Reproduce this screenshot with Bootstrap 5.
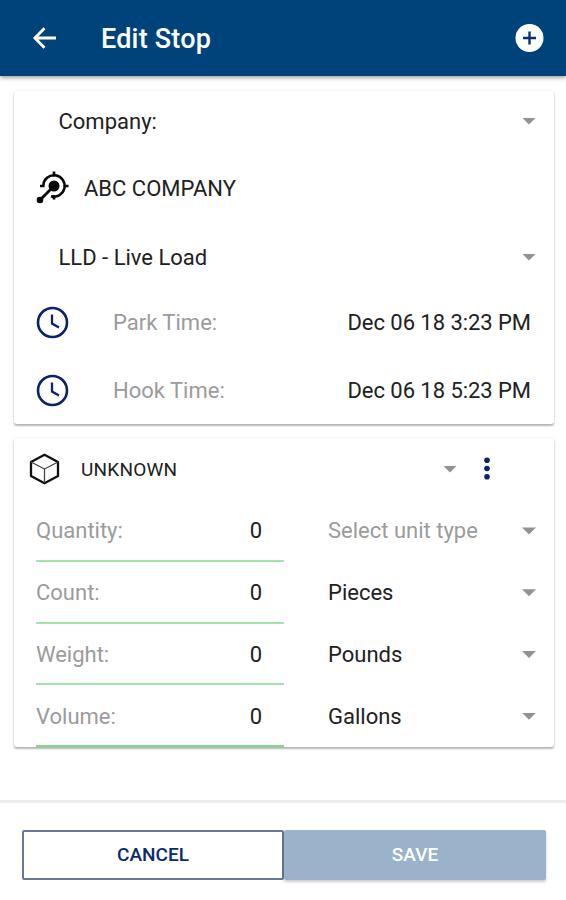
<!DOCTYPE html>
<html lang="en">
<head>
<meta charset="utf-8">
<meta name="viewport" content="width=device-width, initial-scale=1">
<title>Edit Stop</title>
<link href="https://cdn.jsdelivr.net/npm/bootstrap@5.3.0/dist/css/bootstrap.min.css" rel="stylesheet">
<style>
  body { font-family: Roboto, sans-serif; font-size: 22px; line-height: 26px; color: #212121; background: #fff; min-height: 900px; letter-spacing: 0; }
  svg { display: block; flex: none; }
  .topbar { height: 76px; background: #00427a; box-shadow: 0 1px 5px rgba(0,0,0,.5); padding: 0 22px 0 32px; }
  .topbar h1 { font-size: 27px; font-weight: 500; line-height: 32px; margin: 2px 0 0 44px; letter-spacing: .2px; }
  .panel { margin: 0 12px 0 14px; border-radius: 3px; border: 0; box-shadow: 0 2px 2px rgba(0,0,0,.27), 0 0 3px rgba(0,0,0,.1); color: inherit; }
  .stop-panel { margin-top: 15px; height: 333px; padding: 0 23px 0 22px; }
  .cargo-panel { margin-top: 14px; height: 309px; }
  .panel span { padding-top: 2px; }
  .pick { padding-left: 22.5px; margin-right: -5px; }
  .h-a { height: 60px; } .h-b { height: 74px; } .h-c { height: 64px; } .h-d { height: 67px; } .h-e { height: 68px; }
  .muted { color: #9b9b9b; }
  .caret { width: 14px; height: 7px; background: #929292; clip-path: polygon(0 0,100% 0,50% 100%); flex: none; }
  .abc { margin-left: 14px; }
  .time-label { margin-left: 44px; }
  .time-value { letter-spacing: -.05px; }
  .stop-panel .h-d span { padding-top: 0; }
  .cargo-head { height: 62px; padding-left: 15px; font-size: 19px; }
  .cargo-name { margin-left: 21px; letter-spacing: .2px; }
  .dots { margin: 0 64px 0 27px; }
  .measure { height: 61.75px; padding-left: 22px; padding-right: 18px; }
  .entry { width: 248px; border-bottom: 2px solid #a6e3ac; padding-right: 22px; }
  .panel .entry span { padding-top: 3px; }
  .panel .unit span { padding-top: 1px; }
  .measure:last-child .entry { border-color: #7edb88; }
  .unit { padding-left: 44px; }
  .footer-bar { margin-top: 53px; border-top: 3px solid #ededed; padding: 27px 20px 0 22px; }
  .action { height: 50px; border-radius: 2px; font-size: 19px; font-weight: 500; padding: 0; letter-spacing: 0; }
  .cancel, .cancel:hover { border: 2px solid #6b769c; color: #0b2a6b; }
  .save { background: #9ab3cb; color: #fff; border: 0; box-shadow: 0 2px 3px rgba(0,0,0,.2); }
</style>
</head>
<body>
<header class="topbar d-flex align-items-center text-white">
  <svg width="25" height="24" viewBox="0 0 25 24" fill="none" stroke="#fff" stroke-width="2.8"><path d="M24 12H3M12.500 2.200 2.900 12l9.600 9.800"/></svg>
  <h1>Edit Stop</h1>
  <svg class="ms-auto" width="29" height="29" viewBox="0 0 29 29"><circle cx="14.5" cy="14" r="14" fill="#fff"/><path d="M14.500 7.500v13M8 14h13" stroke="#0a3272" stroke-width="2.400"/></svg>
</header>

<main>
  <section class="card panel stop-panel">
    <div class="pick h-a d-flex align-items-center justify-content-between"><span>Company:</span><i class="caret"></i></div>
    <div class="h-b d-flex align-items-center">
      <svg width="34" height="34" viewBox="0 0 34 34" fill="none" stroke="#0a0a0a"><path d="M7.300 14.500A10.700 10.700 0 1 1 15 25.200" stroke-width="2.500"/><path d="M18 .5v5M28 15h4.500M18 24v4.500M4 15h4.500" stroke-width="2.700"/><path d="M18 15 4 29" stroke-width="2.800"/><circle cx="18" cy="15" r="5.500" fill="#0a0a0a" stroke="none"/><circle cx="4" cy="29" r="3.300" fill="#0a0a0a" stroke="none"/></svg>
      <span class="abc">ABC COMPANY</span>
    </div>
    <div class="pick h-c d-flex align-items-center justify-content-between"><span>LLD - Live Load</span><i class="caret"></i></div>
    <div class="h-d d-flex align-items-center">
      <svg width="33" height="33" viewBox="0 0 33 33" fill="none" stroke="#0c2268" stroke-width="2.6"><circle cx="16.500" cy="16.500" r="14.500"/><path d="M16 8.500v9l7 3.900" stroke-width="2.3"/></svg>
      <span class="time-label muted">Park Time:</span><span class="time-value ms-auto">Dec 06 18 3:23 PM</span>
    </div>
    <div class="h-e d-flex align-items-center">
      <svg width="33" height="33" viewBox="0 0 33 33" fill="none" stroke="#0c2268" stroke-width="2.6"><circle cx="16.500" cy="16.500" r="14.500"/><path d="M16 8.500v9l7 3.900" stroke-width="2.3"/></svg>
      <span class="time-label muted">Hook Time:</span><span class="time-value ms-auto">Dec 06 18 5:23 PM</span>
    </div>
  </section>

  <section class="card panel cargo-panel">
    <div class="cargo-head d-flex align-items-center">
      <svg width="31" height="32" viewBox="0 0 31 32" fill="none" stroke="#111" stroke-linejoin="round"><path d="M15.500 1.700 29 9v14l-13.500 7.300L2 23V9z" stroke-width="2.300"/><path d="M2 9l13.500 7L29 9M15.500 16v14" stroke="#444" stroke-width="1.300"/></svg>
      <span class="flex-grow-1 cargo-name">UNKNOWN</span>
      <i class="caret"></i>
      <svg class="dots" width="6" height="24" viewBox="0 0 6 24" fill="#0c2268"><circle cx="3" cy="3.300" r="2.800"/><circle cx="3" cy="11.500" r="2.800"/><circle cx="3" cy="19.700" r="2.800"/></svg>
    </div>
    <div class="measure d-flex">
      <div class="entry d-flex align-items-center justify-content-between"><span class="muted">Quantity:</span><span>0</span></div>
      <div class="unit flex-grow-1 d-flex align-items-center justify-content-between"><span class="muted">Select unit type</span><i class="caret"></i></div>
    </div>
    <div class="measure d-flex">
      <div class="entry d-flex align-items-center justify-content-between"><span class="muted">Count:</span><span>0</span></div>
      <div class="unit flex-grow-1 d-flex align-items-center justify-content-between"><span>Pieces</span><i class="caret"></i></div>
    </div>
    <div class="measure d-flex">
      <div class="entry d-flex align-items-center justify-content-between"><span class="muted">Weight:</span><span>0</span></div>
      <div class="unit flex-grow-1 d-flex align-items-center justify-content-between"><span>Pounds</span><i class="caret"></i></div>
    </div>
    <div class="measure d-flex">
      <div class="entry d-flex align-items-center justify-content-between"><span class="muted">Volume:</span><span>0</span></div>
      <div class="unit flex-grow-1 d-flex align-items-center justify-content-between"><span>Gallons</span><i class="caret"></i></div>
    </div>
  </section>
</main>

<footer class="footer-bar d-flex">
  <button type="button" class="btn action cancel flex-fill w-50">CANCEL</button>
  <button type="button" class="btn action save flex-fill w-50">SAVE</button>
</footer>
<script src="https://cdn.jsdelivr.net/npm/bootstrap@5.3.0/dist/js/bootstrap.bundle.min.js"></script>
</body>
</html>
